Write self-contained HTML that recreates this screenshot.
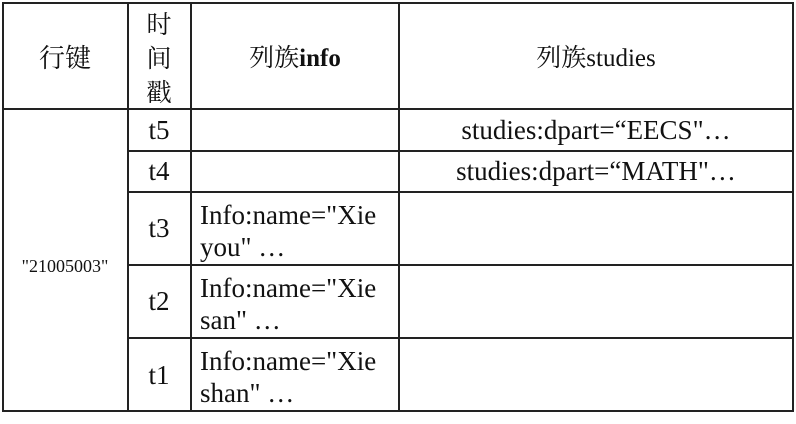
<!DOCTYPE html>
<html><head><meta charset="utf-8"><style>
body{margin:0;width:796px;height:424px;background:#fff;position:relative;overflow:hidden;font-family:"Liberation Serif","Noto Serif CJK SC",serif;color:#111;font-size:27px}
.h,.v{position:absolute;background:#222}
.h{height:2px}.v{width:2px}
.t{position:absolute;white-space:nowrap;line-height:32px}
.c{text-align:center}
</style></head><body>
<div class="h" style="left:2px;width:792px;top:2px"></div>
<div class="h" style="left:2px;width:792px;top:108px"></div>
<div class="h" style="left:128px;width:666px;top:150px"></div>
<div class="h" style="left:128px;width:666px;top:191px"></div>
<div class="h" style="left:128px;width:666px;top:264px"></div>
<div class="h" style="left:128px;width:666px;top:337px"></div>
<div class="h" style="left:2px;width:792px;top:410px"></div>
<div class="v" style="left:2px;top:2px;height:410px"></div>
<div class="v" style="left:127px;top:2px;height:410px"></div>
<div class="v" style="left:190px;top:2px;height:410px"></div>
<div class="v" style="left:398px;top:2px;height:410px"></div>
<div class="v" style="left:792px;top:2px;height:410px"></div>

<div class="t c" style="left:2px;width:126px;top:43px;font-size:26px">行键</div>
<div class="t c" style="left:128px;width:62px;top:6px;line-height:34px;white-space:normal;font-size:25px;font-family:'Noto Serif CJK SC',serif">时<br>间<br>戳</div>
<div class="t c" style="left:192px;width:206px;top:43px;font-size:25px">列族<b>info</b></div>
<div class="t c" style="left:400px;width:392px;top:43px;font-size:25px">列族studies</div>

<div class="t c" style="left:2px;width:126px;top:250px;font-size:18px">"21005003"</div>
<div class="t c" style="left:128px;width:62px;top:114px">t5</div>
<div class="t c" style="left:128px;width:62px;top:155px">t4</div>
<div class="t c" style="left:128px;width:62px;top:212px">t3</div>
<div class="t c" style="left:128px;width:62px;top:285px">t2</div>
<div class="t c" style="left:128px;width:62px;top:359px">t1</div>

<div class="t" style="left:200px;top:199px">Info:name="Xie<br>you" …</div>
<div class="t" style="left:200px;top:272px">Info:name="Xie<br>san" …</div>
<div class="t" style="left:200px;top:345px">Info:name="Xie<br>shan" …</div>

<div class="t c" style="left:400px;width:392px;top:114px">studies:dpart=“EECS"…</div>
<div class="t c" style="left:400px;width:392px;top:155px">studies:dpart=“MATH"…</div>
</body></html>
